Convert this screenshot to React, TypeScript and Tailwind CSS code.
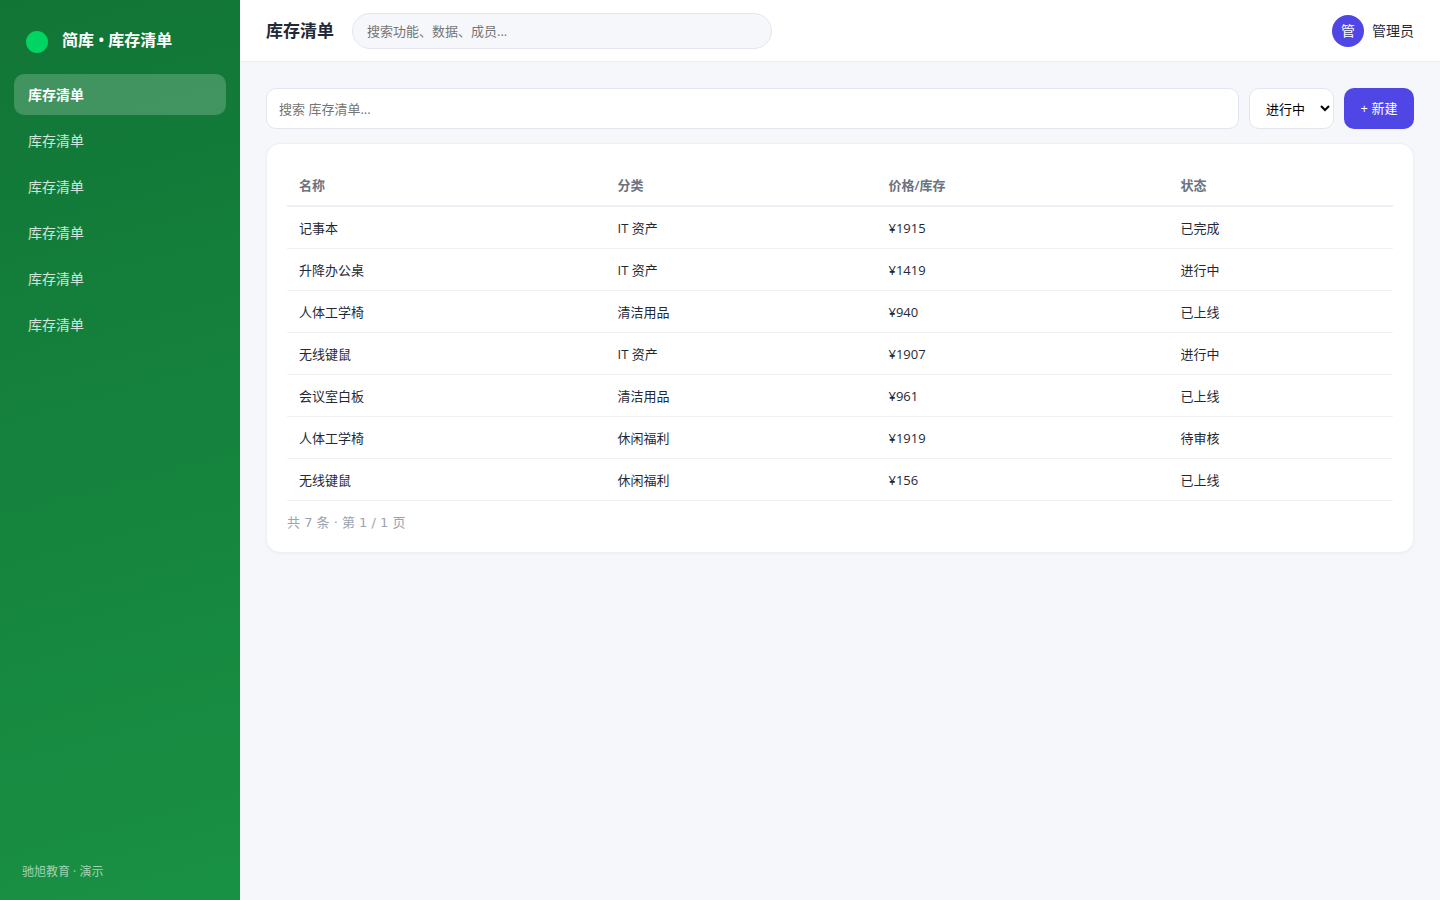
import React, { useState } from 'react';
import clsx from 'clsx';

const navItems = ['库存清单', '库存清单', '库存清单', '库存清单', '库存清单', '库存清单'];

const columns = [
  { label: '名称', width: 'w-[28.8%]' },
  { label: '分类', width: 'w-[24.5%]' },
  { label: '价格/库存', width: 'w-[26.4%]' },
  { label: '状态', width: 'w-[20.3%]' },
];

const rows = [
  { name: '记事本', category: 'IT 资产', price: '¥1915', status: '已完成' },
  { name: '升降办公桌', category: 'IT 资产', price: '¥1419', status: '进行中' },
  { name: '人体工学椅', category: '清洁用品', price: '¥940', status: '已上线' },
  { name: '无线键鼠', category: 'IT 资产', price: '¥1907', status: '进行中' },
  { name: '会议室白板', category: '清洁用品', price: '¥961', status: '已上线' },
  { name: '人体工学椅', category: '休闲福利', price: '¥1919', status: '待审核' },
  { name: '无线键鼠', category: '休闲福利', price: '¥156', status: '已上线' },
];

function Sidebar() {
  const [active, setActive] = useState(0);

  return (
    <aside className="flex w-60 shrink-0 flex-col bg-linear-165 from-[#117536] to-[#199144] px-3.5 pt-6 pb-5 text-white">
      <div className="mb-[18px] flex h-8 items-center gap-3.5 pl-3">
        <span className="mt-1 size-[22px] rounded-full bg-[#00d563]" />
        <span className="text-base font-semibold">简库 • 库存清单</span>
      </div>
      <nav className="flex flex-col gap-[5px]">
        {navItems.map((item, i) => (
          <a
            key={i}
            href="#"
            onClick={() => setActive(i)}
            className={clsx(
              'flex h-[41px] items-center rounded-[10px] px-3.5 text-sm',
              active === i ? 'bg-white/20 font-semibold text-white' : 'text-white/80'
            )}
          >
            {item}
          </a>
        ))}
      </nav>
      <div className="mt-auto px-2 text-xs leading-4 text-white/60">驰旭教育 · 演示</div>
    </aside>
  );
}

function Header() {
  return (
    <header className="flex h-[62px] items-center gap-[18px] border-b border-[#eceef3] bg-white px-[26px]">
      <h1 className="shrink-0 text-[17px] font-bold">库存清单</h1>
      <input
        type="search"
        aria-label="搜索功能、数据、成员"
        placeholder="搜索功能、数据、成员..."
        className="h-9 w-full max-w-[420px] rounded-full border border-[#e3e6ee] bg-[#f5f7fb] px-3.5 text-[13px] placeholder:text-[#757575] focus:outline-none"
      />
      <div className="ml-auto flex shrink-0 items-center gap-2">
        <div className="flex size-8 items-center justify-center rounded-full bg-[#4f46e5] text-sm text-white">管</div>
        <span className="text-sm">管理员</span>
      </div>
    </header>
  );
}

export default function App() {
  const [search, setSearch] = useState('');
  const [status, setStatus] = useState('进行中');

  const visible = rows.filter(row => row.name.includes(search));

  return (
    <div className="flex min-h-screen bg-[#f5f7fb] font-['Open_Sans','Noto_Sans_CJK_SC',sans-serif] text-[#1f2937]">
      <Sidebar />
      <div className="min-w-0 flex-1">
        <Header />
        <main className="p-[26px]">
          <div className="mb-3.5 flex gap-2.5 text-[13px]">
            <input
              type="text"
              aria-label="搜索 库存清单"
              placeholder="搜索 库存清单..."
              value={search}
              onChange={e => setSearch(e.target.value)}
              className="h-[41px] min-w-0 flex-1 rounded-[10px] border border-[#e3e6ee] bg-white px-3 placeholder:text-[#757575] focus:outline-none"
            />
            <select
              aria-label="状态"
              value={status}
              onChange={e => setStatus(e.target.value)}
              className="h-[41px] w-[85px] rounded-[10px] border border-[#e3e6ee] bg-white px-3 pr-0 text-black"
            >
              <option>进行中</option>
              <option>已完成</option>
              <option>已上线</option>
              <option>待审核</option>
            </select>
            <button type="button" className="h-[41px] w-[70px] rounded-[10px] bg-[#4f46e5] text-white hover:bg-[#4338ca]">
              + 新建
            </button>
          </div>

          <section className="rounded-[14px] border border-[#eef0f5] bg-white px-5 pt-5 pb-[19px] shadow-[0_1px_3px_rgba(20,20,50,0.04)]">
            <table className="w-full table-fixed border-collapse text-left text-[13px] leading-5">
              <thead>
                <tr className="h-[42px] border-b-2 border-[#eef0f5] text-[#6b7280]">
                  {columns.map(col => (
                    <th key={col.label} className={clsx('px-3 font-semibold', col.width)}>
                      {col.label}
                    </th>
                  ))}
                </tr>
              </thead>
              <tbody>
                {visible.map((row, i) => (
                  <tr key={i} className="h-[42px] border-b border-[#f0f1f5]">
                    <td className="px-3 pt-0.5">{row.name}</td>
                    <td className="px-3 pt-0.5">{row.category}</td>
                    <td className="px-3 pt-0.5">{row.price}</td>
                    <td className="px-3 pt-0.5">{row.status}</td>
                  </tr>
                ))}
              </tbody>
            </table>
            <div className="mt-3 font-['DejaVu_Sans','Noto_Sans_CJK_SC',sans-serif] text-[13px] leading-5 text-[#9ca3af]">
              共 {visible.length} 条 · 第 1 / 1 页
            </div>
          </section>
        </main>
      </div>
    </div>
  );
}
